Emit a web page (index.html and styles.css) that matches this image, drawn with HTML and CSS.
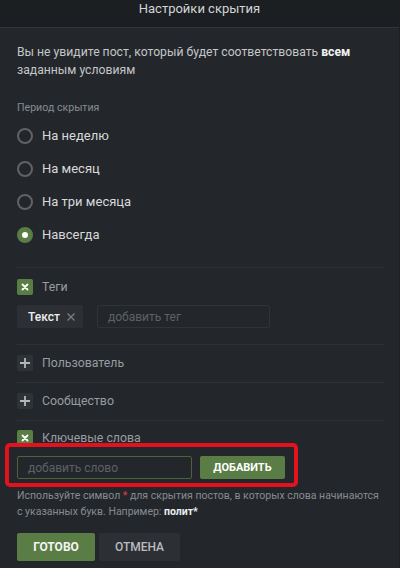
FILE: index.html
```html
<!DOCTYPE html>
<html lang="ru">
<head>
<meta charset="utf-8">
<title>Настройки скрытия</title>
<link rel="stylesheet" href="styles.css">
</head>
<body>
<div class="modal">
  <header class="modal-head">Настройки скрытия</header>
  <main class="modal-body">
    <p class="intro">Вы не увидите пост, который будет соответствовать <b>всем</b> заданным условиям</p>

    <section class="period">
      <div class="caption">Период скрытия</div>
      <label class="radio"><span class="dot"></span><span>На неделю</span></label>
      <label class="radio"><span class="dot"></span><span>На месяц</span></label>
      <label class="radio"><span class="dot"></span><span>На три месяца</span></label>
      <label class="radio checked"><span class="dot"></span><span>Навсегда</span></label>
    </section>

    <section class="filter tags">
      <div class="filter-head">
        <span class="box on"><svg viewBox="0 0 16 16" width="16" height="16"><path d="M5.5 5.5l5 5M10.5 5.5l-5 5" stroke="#fff" stroke-width="1.8" stroke-linecap="round"/></svg></span>
        <span class="filter-title">Теги</span>
      </div>
      <div class="tag-row">
        <span class="chip">Текст<svg class="chip-x" viewBox="0 0 10 10" width="10" height="10"><path d="M1.5 1.5l7 7M8.5 1.5l-7 7" stroke="#7a7e83" stroke-width="1.3"/></svg></span>
        <span class="input tag-input">добавить тег</span>
      </div>
    </section>

    <section class="filter">
      <div class="filter-head">
        <span class="box off"><svg viewBox="0 0 16 16" width="16" height="16"><path d="M8 3v10M3 8h10" stroke="#b4b8bc" stroke-width="1.8"/></svg></span>
        <span class="filter-title">Пользователь</span>
      </div>
    </section>

    <section class="filter">
      <div class="filter-head">
        <span class="box off"><svg viewBox="0 0 16 16" width="16" height="16"><path d="M8 3v10M3 8h10" stroke="#b4b8bc" stroke-width="1.8"/></svg></span>
        <span class="filter-title">Сообщество</span>
      </div>
    </section>

    <section class="filter keywords">
      <div class="filter-head">
        <span class="box on"><svg viewBox="0 0 16 16" width="16" height="16"><path d="M5.5 5.5l5 5M10.5 5.5l-5 5" stroke="#fff" stroke-width="1.8" stroke-linecap="round"/></svg></span>
        <span class="filter-title">Ключевые слова</span>
      </div>
      <div class="kw-row">
        <span class="input kw-input">добавить слово</span>
        <span class="btn btn-add">Добавить</span>
        <span class="highlight"></span>
      </div>
      <p class="hint">Используйте символ <span class="star">*</span> для скрытия постов, в которых слова начинаются с указанных букв. Например: <b>полит*</b></p>
    </section>

    <div class="actions">
      <span class="btn btn-done">Готово</span>
      <span class="btn btn-cancel">Отмена</span>
    </div>
  </main>
</div>
</body>
</html>
```
FILE: styles.css
```css
* { box-sizing: border-box; }
html, body { margin: 0; padding: 0; }
body {
  background: #23272b;
  font-family: Roboto, "Liberation Sans", sans-serif;
  color: #c9cbcd;
  width: 400px;
  height: 568px;
  overflow: hidden;
}
.modal { border-right: 1px solid #1d2023; min-height: 568px; }
.modal-head {
  height: 28px;
  background: #1c1f22;
  border-bottom: 1px solid #30353a;
  text-align: center;
  font-size: 13px;
  line-height: 17px;
  color: #d2d4d6;
}
.modal-body { padding: 0 15px 0 17px; }
.intro {
  margin: 15px 0 0;
  font-size: 12.2px;
  line-height: 18px;
  color: #c4c6c8;
}
.intro b { color: #f2f2f2; font-weight: 700; }

.period { border-bottom: 1px solid #2e3237; padding-bottom: 16px; margin-top: 22px; }
.caption { font-size: 10.6px; line-height: 14px; color: #878b90; margin-bottom: 4px; }
.radio {
  display: flex;
  align-items: center;
  gap: 9px;
  height: 33px;
  font-size: 13px;
  color: #d8d9da;
}
.dot {
  width: 16px; height: 16px;
  border-radius: 50%;
  border: 2px solid #5f6368;
  flex: none;
}
.radio.checked .dot {
  border: 5px solid #5a7d45;
  background: #fff;
}

.filter { border-bottom: 1px solid #2e3237; padding: 10px 0 11px; }
.filter.tags { padding-top: 11px; }
.filter-head { display: flex; align-items: center; gap: 9px; height: 16px; }
.box {
  width: 16px; height: 16px; border-radius: 2px; flex: none;
  display: flex;
}
.box.on { background: #5a7d45; }
.box.off { background: #2e3338; }
.filter-title { font-size: 12.3px; color: #989ca0; }

.tag-row { display: flex; gap: 14px; margin-top: 10px; margin-bottom: 5px; }
.chip {
  display: flex; align-items: center; gap: 6px;
  height: 23px; padding: 0 7px 0 11px;
  background: #2c3035; border-radius: 2px;
  font-size: 12px; color: #eceded; font-weight: 500;
}
.input {
  display: flex; align-items: center;
  height: 23px;
  border: 1px solid #2f3338;
  border-radius: 2px;
  font-size: 12px;
  color: #5d6166;
}
.tag-input { width: 173px; padding-left: 10px; }

.filter.keywords { border-bottom: none; padding: 9px 0 0; }
.kw-row { position: relative; display: flex; gap: 8px; margin-top: 10px; }
.kw-input { width: 175px; border-color: #4a6338; padding-left: 10px; }
.btn {
  display: flex; align-items: center; justify-content: center;
  text-transform: uppercase; font-weight: 700; border-radius: 2px;
}
.btn-add { width: 85px; height: 23px; background: #5a7d45; color: #fff; font-size: 11px; }
.highlight {
  position: absolute;
  left: -12px; top: -13px;
  width: 293px; height: 44px;
  border: 4px solid #e3121c;
  border-radius: 5px;
  pointer-events: none;
}
.hint {
  margin: 9px 0 0;
  font-size: 10.5px;
  line-height: 16px;
  color: #878b90;
}
.hint .star { color: #e0403a; }
.hint b { color: #eceded; }

.actions { display: flex; gap: 4px; margin-top: 13px; }
.btn-done { width: 78px; height: 28px; background: #5a7d45; color: #f4f4f4; font-size: 12px; }
.btn-cancel { width: 81px; height: 28px; background: #2c3035; color: #b9bcbf; font-size: 12px; font-weight: 500; }
```
